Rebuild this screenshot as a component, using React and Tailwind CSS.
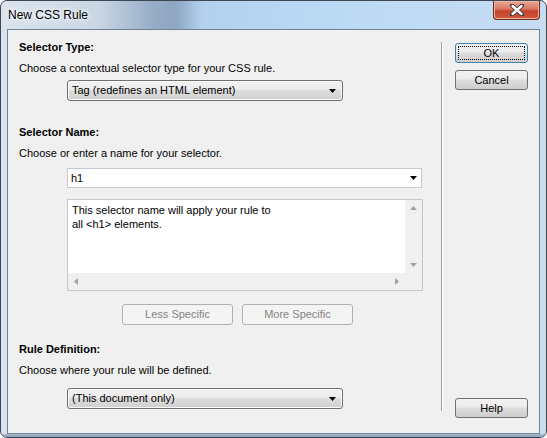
const uiFont = { fontFamily: "Tahoma, 'Liberation Sans', Arial, sans-serif" };

function Caret({ className = "" }) {
    return (
        <svg viewBox="0 0 7 4" className={`h-[4px] w-[7px] ${className}`}>
            <path d="M0 0h7L3.5 4z" fill="#000" />
        </svg>
    );
}

function Dropdown({ label }) {
    return (
        <div className="ml-[48px] flex h-[21px] w-[276px] items-center justify-between rounded-[3px] border border-[#707070] bg-[linear-gradient(180deg,#f2f2f2_0%,#ebebeb_45%,#dddddd_50%,#cfcfcf_100%)] pl-[4px] pr-[6px] shadow-[inset_0_0_0_1px_#fbfbfb]">
            <span className="text-[11px] leading-[13px] text-black">{label}</span>
            <Caret />
        </div>
    );
}

function WinButton({ children, focused = false, disabled = false, className = "" }) {
    if (disabled) {
        return (
            <div className={`flex h-[21px] items-center justify-center rounded-[3px] border border-[#adb2b5] bg-[#f4f4f4] text-[11px] text-[#838383] ${className}`}>
                {children}
            </div>
        );
    }
    return (
        <div
            className={`relative flex h-[20px] w-[73px] items-center justify-center rounded-[3px] border bg-[linear-gradient(180deg,#f2f2f2_0%,#ebebeb_45%,#dddddd_50%,#cfcfcf_100%)] text-[11px] text-black ${
                focused ? "border-[#3c7fb1]" : "border-[#707070]"
            } ${className}`}
        >
            {focused && <div className="absolute inset-[2px] border border-dotted border-black" />}
            <span className="relative">{children}</span>
        </div>
    );
}

function ScrollArrow({ dir }) {
    const d = {
        up: "M0 4L3.5 0L7 4z",
        down: "M0 0h7L3.5 4z",
        left: "M4 0v7L0 3.5z",
        right: "M0 0v7L4 3.5z",
    }[dir];
    const size = dir === "up" || dir === "down" ? "h-[4px] w-[7px]" : "h-[7px] w-[4px]";
    const vb = dir === "up" || dir === "down" ? "0 0 7 4" : "0 0 4 7";
    return (
        <svg viewBox={vb} className={size}>
            <path d={d} fill="#a3a3a3" />
        </svg>
    );
}

export default function App() {
    return (
        <div className="h-[438px] w-[547px] bg-white" style={uiFont}>
            <div className="flex h-[438px] w-[547px] flex-col overflow-hidden rounded-[7px] border border-[#3d4754] bg-[linear-gradient(90deg,#dbe4ee_0%,#c9d6e4_18%,#96adc6_28%,#8da6c1_32%,#b3d1ee_37%,#bddaf5_65%,#c6ddf2_100%)]">
                {/* title bar */}
                <div className="flex h-[28px] shrink-0 items-start justify-between">
                    <span className="pl-[7px] pt-[7px] text-[12px] leading-[15px] text-black [text-shadow:0_0_8px_#ffffff,0_0_4px_#ffffff]">
                        New CSS Rule
                    </span>
                    <div className="mr-[6px] flex h-[19px] w-[47px] items-center justify-center rounded-b-[4px] border border-t-0 border-[#6a2a1c] bg-[linear-gradient(180deg,#e9a898_0%,#d9765f_45%,#c2412a_55%,#cf5a3e_100%)] shadow-[inset_0_0_0_1px_#f0b4a4]">
                        <svg viewBox="0 0 14 12" className="h-[12px] w-[14px]">
                            <path
                                d="M2 1.5L12 10.5M12 1.5L2 10.5"
                                stroke="#3b3b3b"
                                strokeWidth="4.2"
                                strokeLinecap="round"
                            />
                            <path
                                d="M2.5 2L11.5 10M11.5 2L2.5 10"
                                stroke="#ffffff"
                                strokeWidth="2.4"
                                strokeLinecap="round"
                            />
                        </svg>
                    </div>
                </div>

                {/* client area */}
                <div className="mx-[6px] flex h-[405px] shrink-0 border border-[#6f8296] bg-[#f0f0f0]">
                    {/* left column */}
                    <div className="flex w-[433px] flex-col pl-[11px] pt-[11px]">
                        <div className="text-[11px] font-bold leading-[13px] text-black">Selector Type:</div>
                        <div className="mt-[8px] text-[11px] leading-[13px] text-black">
                            Choose a contextual selector type for your CSS rule.
                        </div>
                        <div className="mt-[5px]">
                            <Dropdown label="Tag (redefines an HTML element)" />
                        </div>

                        <div className="mt-[25px] text-[11px] font-bold leading-[13px] text-black">Selector Name:</div>
                        <div className="mt-[8px] text-[11px] leading-[13px] text-black">
                            Choose or enter a name for your selector.
                        </div>
                        <div className="ml-[48px] mt-[8px] flex h-[20px] w-[355px] items-center justify-between border border-[#c5c9d0] bg-white pl-[3px] pr-[4px]">
                            <span className="text-[11px] leading-[13px] text-black">h1</span>
                            <Caret />
                        </div>

                        <div className="ml-[48px] mt-[11px] flex h-[92px] w-[356px] flex-col border border-[#c8c8c8] bg-white">
                            <div className="flex min-h-0 flex-1">
                                <div className="flex-1 pl-[4px] pt-[3px] text-[11px] leading-[14px] text-black">
                                    This selector name will apply your rule to
                                    <br />
                                    all &lt;h1&gt; elements.
                                </div>
                                <div className="flex w-[17px] flex-col items-center justify-between bg-[#f0f0f0] py-[6px]">
                                    <ScrollArrow dir="up" />
                                    <ScrollArrow dir="down" />
                                </div>
                            </div>
                            <div className="flex h-[17px]">
                                <div className="flex flex-1 items-center justify-between bg-[#f0f0f0] px-[6px]">
                                    <ScrollArrow dir="left" />
                                    <ScrollArrow dir="right" />
                                </div>
                                <div className="w-[17px] bg-[#f0f0f0]" />
                            </div>
                        </div>

                        <div className="mt-[13px] flex gap-[9px] pl-[103px]">
                            <WinButton disabled className="w-[111px]">Less Specific</WinButton>
                            <WinButton disabled className="w-[111px]">More Specific</WinButton>
                        </div>

                        <div className="mt-[18px] text-[11px] font-bold leading-[13px] text-black">Rule Definition:</div>
                        <div className="mt-[8px] text-[11px] leading-[13px] text-black">
                            Choose where your rule will be defined.
                        </div>
                        <div className="mt-[11px]">
                            <Dropdown label="(This document only)" />
                        </div>
                    </div>

                    {/* etched separator */}
                    <div className="mb-[22px] mt-[12px] w-px bg-[#a0a0a0]" />
                    <div className="mb-[22px] mt-[12px] w-px bg-white" />

                    {/* right column */}
                    <div className="flex flex-col justify-between pb-[15px] pl-[12px] pt-[13px]">
                        <div className="flex flex-col gap-[7px]">
                            <WinButton focused>OK</WinButton>
                            <WinButton>Cancel</WinButton>
                        </div>
                        <WinButton>Help</WinButton>
                    </div>
                </div>

                {/* bottom frame */}
                <div className="flex-1 bg-[linear-gradient(180deg,#a9bccf_0%,#8a9eb3_100%)]" />
            </div>
        </div>
    );
}
